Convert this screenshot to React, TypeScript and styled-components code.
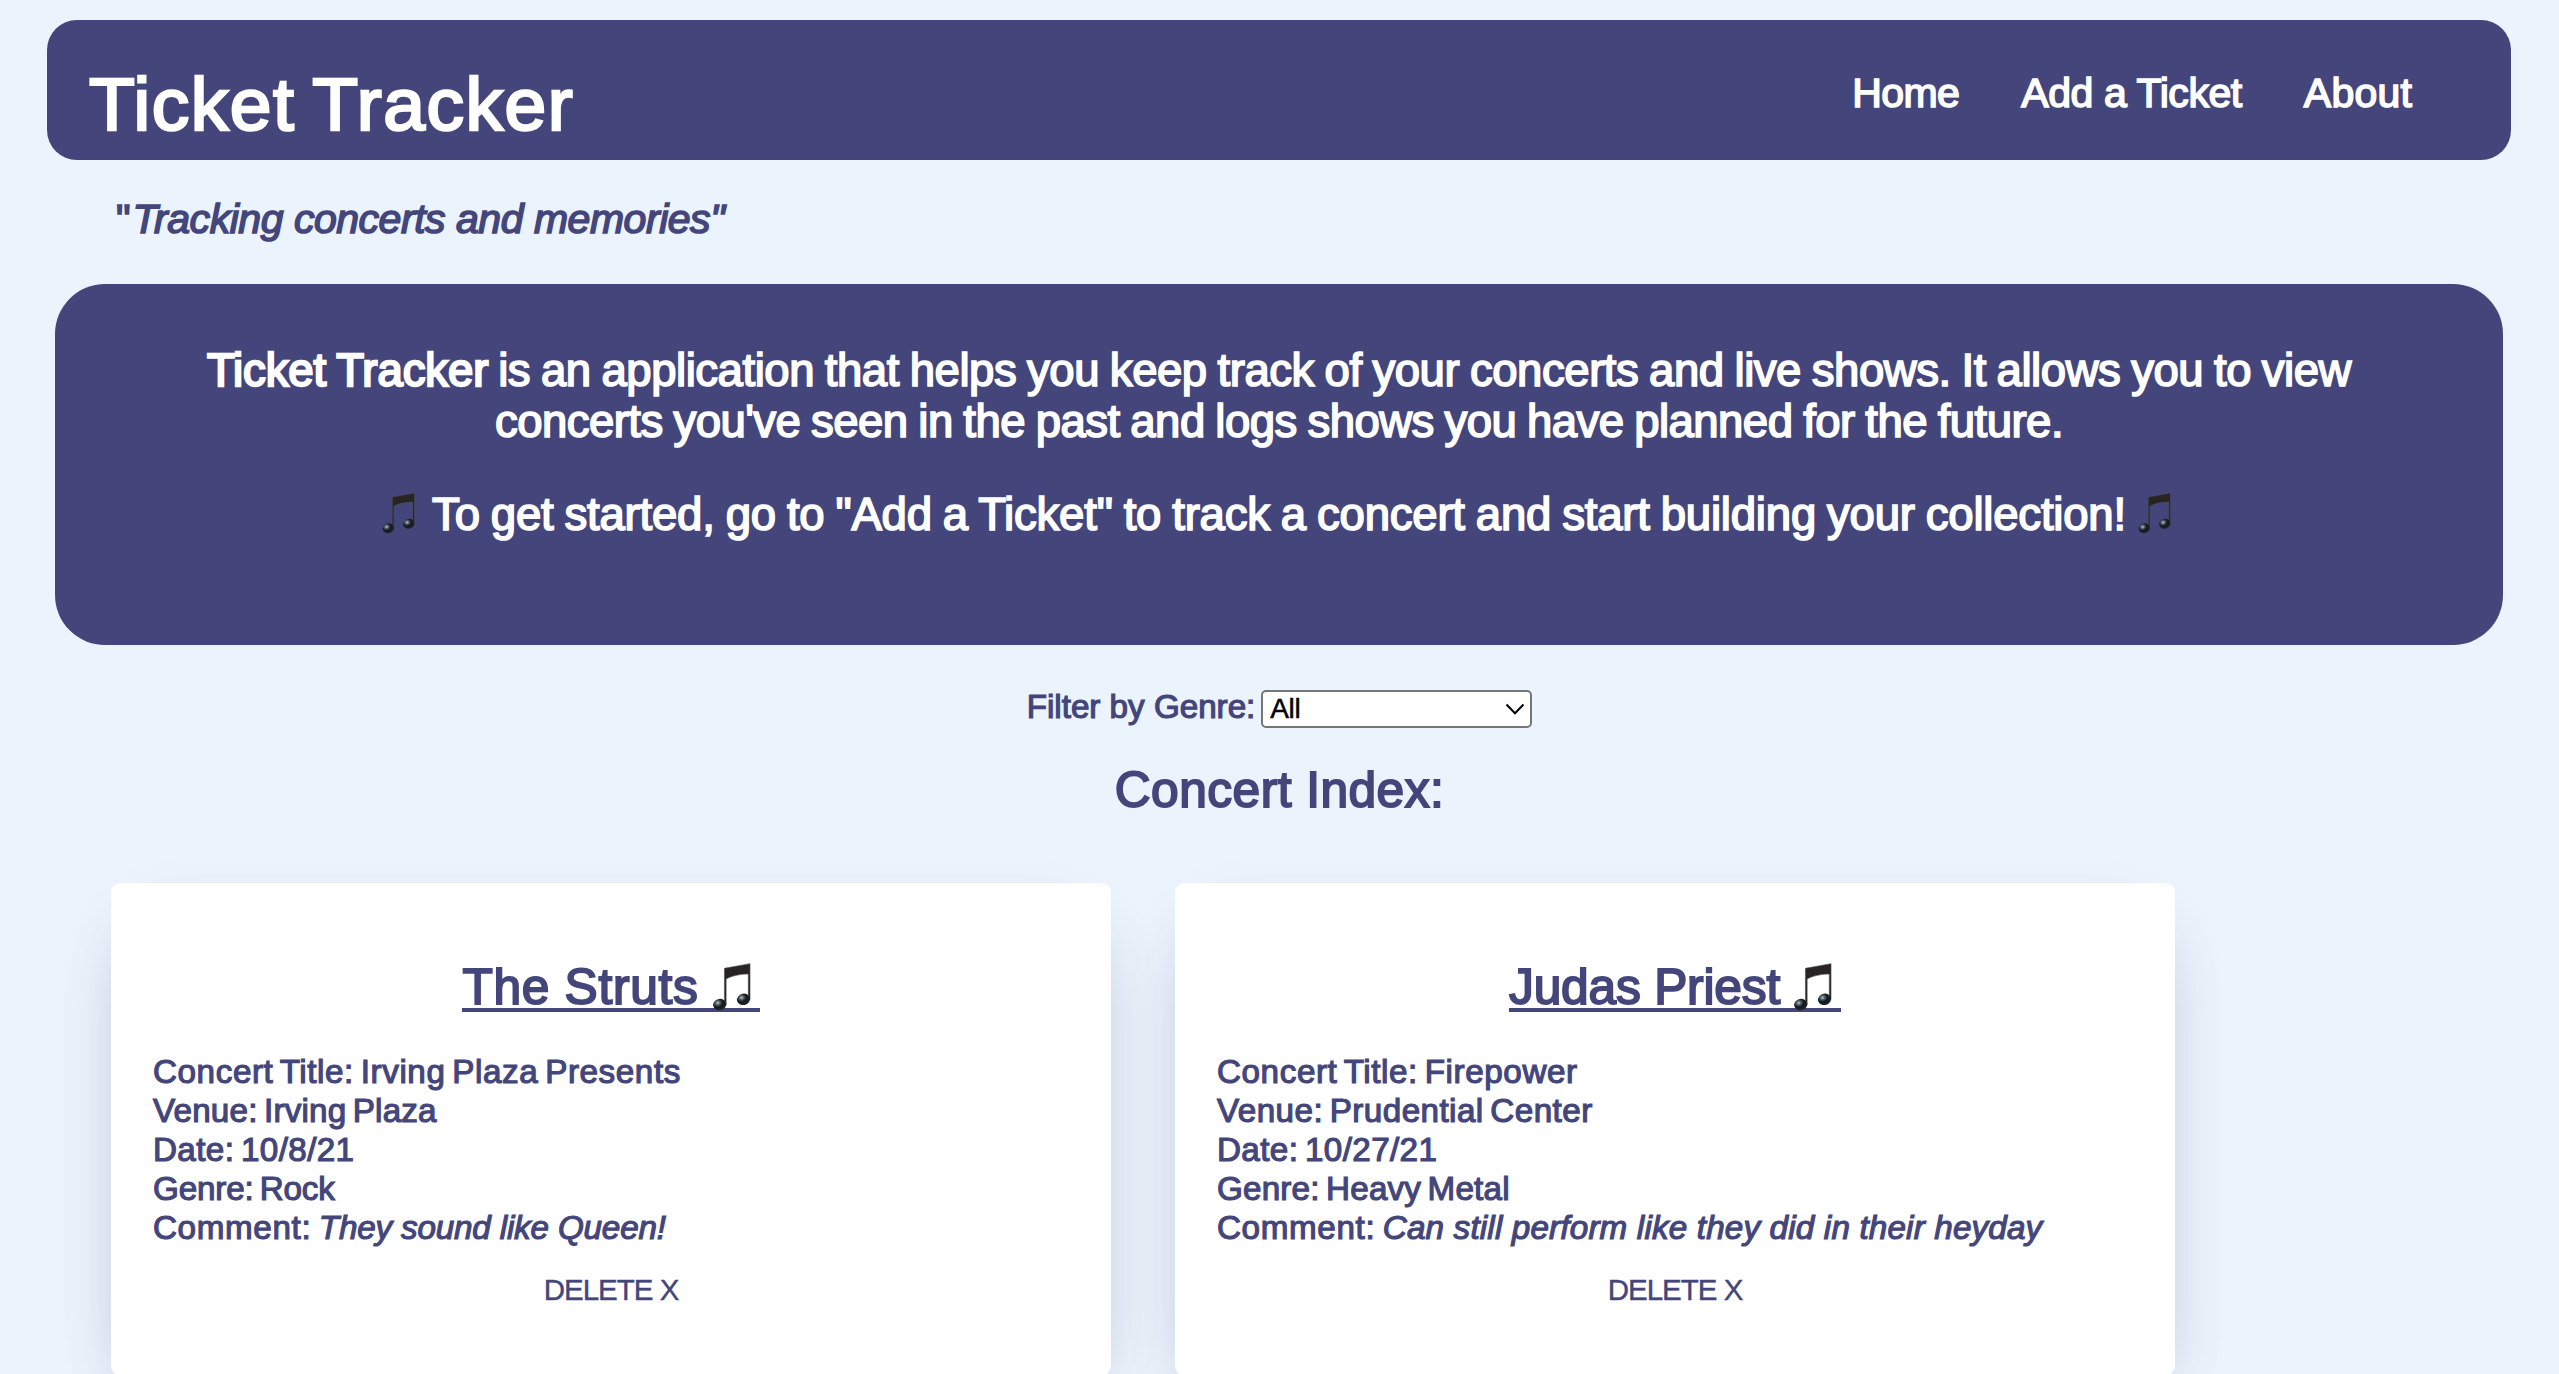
import React from "react";
import styled, { createGlobalStyle } from "styled-components";

const INDIGO = "#44467b";
const SKY = "#ebf3fd";
const SANS = `"Liberation Sans", Arial, Helvetica, sans-serif`;

const GlobalStyle = createGlobalStyle`
  html, body { margin: 0; padding: 0; background: ${SKY}; overflow: hidden; }
  * { box-sizing: border-box; }
`;

const Page = styled.div`
  display: flex;
  flex-direction: column;
  width: 2559px;
  height: 1374px;
  padding-top: 20px;
  overflow: hidden;
  background: ${SKY};
  color: ${INDIGO};
  font-family: ${SANS};
  white-space: nowrap;
`;

const Header = styled.header`
  flex: none;
  display: flex;
  justify-content: space-between;
  align-items: flex-start;
  height: 140px;
  margin: 0 48px 0 47px;
  padding: 0 99px 0 42px;
  border-radius: 30px;
  background: ${INDIGO};
  color: #fff;
`;

const Brand = styled.h1`
  margin: 39px 0 0;
  font-size: 75px;
  font-weight: 400;
  line-height: 90px;
  letter-spacing: 1.5px;
  word-spacing: -4px;
  -webkit-text-stroke: 2.6px currentColor;
`;

const Nav = styled.nav`
  display: flex;
  gap: 62px;
  margin-top: 49px;
`;

const NavLink = styled.a<{ $track: number }>`
  font-size: 41px;
  line-height: 48px;
  letter-spacing: ${(p) => p.$track}px;
  -webkit-text-stroke: 1.6px currentColor;
`;

const Tagline = styled.p`
  margin: 35px 0 0 116px;
  font-size: 41px;
  line-height: 48px;
  -webkit-text-stroke: 1.6px currentColor;

  em {
    margin-left: 2px;
    letter-spacing: -0.47px;
  }
`;

const Intro = styled.section`
  flex: none;
  display: flex;
  flex-direction: column;
  align-items: center;
  height: 361px;
  margin: 41px 56px 0 55px;
  padding-top: 61px;
  border-radius: 50px;
  background: ${INDIGO};
  color: #fff;
  font-size: 45.5px;
  line-height: 51px;
  word-spacing: -1.4px;
  -webkit-text-stroke: 1.7px currentColor;
`;

const IntroLine = styled.div<{ $track: number; $top?: number }>`
  display: flex;
  height: 51px;
  margin-top: ${(p) => p.$top ?? 0}px;
  letter-spacing: ${(p) => p.$track}px;
`;

const Strong = styled.b`
  margin-right: 10px;
  font-weight: 400;
  letter-spacing: -0.1px;
  -webkit-text-stroke: 2.3px currentColor;
`;

const NoteSvg = styled.svg<{ $size: number; $gap: number }>`
  flex: none;
  display: block;
  width: ${(p) => p.$size}px;
  height: ${(p) => (p.$size * 50) / 44}px;
  margin: 0 ${(p) => p.$gap}px;
`;

const FilterRow = styled.div`
  display: flex;
  justify-content: center;
  gap: 6px;
  height: 40px;
  margin-top: 41px;
`;

const FilterLabel = styled.label`
  font-size: 33.2px;
  line-height: 42px;
  -webkit-text-stroke: 1.2px currentColor;
`;

const SelectBox = styled.div`
  position: relative;
  width: 271px;
  height: 38px;
  margin-top: 4px;

  svg {
    position: absolute;
    top: 13px;
    right: 7px;
    width: 20px;
    height: 12px;
    pointer-events: none;
  }
`;

const Select = styled.select`
  appearance: none;
  display: block;
  width: 100%;
  height: 100%;
  margin: 0;
  padding: 0 7px;
  border: 2px solid #767676;
  border-radius: 5px;
  background: #fff;
  color: #000;
  font: 400 28px/32px ${SANS};
  letter-spacing: -0.4px;
  -webkit-text-stroke: 0.5px #000;
`;

const IndexTitle = styled.h2`
  margin: 35px 0 0;
  font-size: 49.7px;
  font-weight: 400;
  line-height: 58px;
  letter-spacing: 0.46px;
  text-align: center;
  -webkit-text-stroke: 1.9px currentColor;
`;

const Cards = styled.div`
  display: flex;
  gap: 64px;
  margin: 64px 0 0 111px;
`;

const Card = styled.article`
  flex: none;
  display: flex;
  flex-direction: column;
  align-items: center;
  width: 1000px;
  height: 492px;
  padding: 76px 42px 0;
  border-radius: 9px;
  background: #fff;
  box-shadow:
    0 24px 76px -12px rgba(40, 50, 80, 0.06),
    0 36px 72px -36px rgba(0, 0, 0, 0.3);
`;

const Artist = styled.h3<{ $track: number }>`
  display: flex;
  align-items: flex-start;
  gap: 10px;
  height: 53px;
  margin: 0;
  border-bottom: 4px solid ${INDIGO};
  font-size: 49.7px;
  font-weight: 400;
  line-height: 57px;
  letter-spacing: ${(p) => p.$track}px;
  -webkit-text-stroke: 1.9px currentColor;
`;

const Details = styled.div`
  align-self: stretch;
  margin-top: 39.5px;
  font-size: 33.2px;
  line-height: 39px;
  -webkit-text-stroke: 1.2px currentColor;
`;

const DetailRow = styled.div<{ $track: number }>`
  letter-spacing: ${(p) => p.$track}px;
  word-spacing: -3px;
`;

const CommentRow = styled.div`
  display: flex;
  gap: 7.5px;
  letter-spacing: 0.65px;
`;

const Comment = styled.em<{ $track: number }>`
  letter-spacing: ${(p) => p.$track}px;
`;

const DeleteButton = styled.button`
  margin: 26.5px 0 0;
  padding: 0;
  border: 0;
  background: none;
  color: ${INDIGO};
  font: 400 29.5px/34px ${SANS};
  letter-spacing: -1px;
  -webkit-text-stroke: 0.4px currentColor;
`;

function Note({ size, gap = 0 }: { size: number; gap?: number }) {
  return (
    <NoteSvg $size={size} $gap={gap} viewBox="0 0 44 50" role="img" aria-label="musical note">
      <defs>
        <radialGradient id="noteHead" cx="0.38" cy="0.32" r="0.62">
          <stop offset="0" stopColor="#b5c6cd" />
          <stop offset="0.3" stopColor="#4c5a62" />
          <stop offset="0.6" stopColor="#14181c" />
          <stop offset="1" stopColor="#1d2529" />
        </radialGradient>
        <linearGradient id="noteBeam" x1="0" y1="0" x2="0" y2="1">
          <stop offset="0" stopColor="#2b2626" />
          <stop offset="1" stopColor="#1f1a1b" />
        </linearGradient>
      </defs>
      <path
        d="M13.3 8 35.4 4V35H33.9V13C28 13 20 14.2 14.8 17.2V39.6H13.3Z"
        fill="url(#noteBeam)"
        stroke="#4a5157"
        strokeWidth="0.5"
      />
      <ellipse cx="9.3" cy="39.3" rx="5.7" ry="4.9" fill="url(#noteHead)" transform="rotate(-12 9.3 39.3)" />
      <ellipse cx="29.8" cy="34.8" rx="5.7" ry="4.9" fill="url(#noteHead)" transform="rotate(-12 29.8 34.8)" />
    </NoteSvg>
  );
}

const links = [
  { label: "Home", track: -0.6 },
  { label: "Add a Ticket", track: -0.42 },
  { label: "About", track: 0.2 },
];

const concerts = [
  {
    artist: "The Struts",
    artistTrack: 0.7,
    title: "Irving Plaza Presents",
    venue: "Irving Plaza",
    venueTrack: 0.2,
    date: "10/8/21",
    genre: "Rock",
    genreTrack: -0.15,
    comment: "They sound like Queen!",
    commentTrack: -0.16,
  },
  {
    artist: "Judas Priest",
    artistTrack: -0.2,
    title: "Firepower",
    venue: "Prudential Center",
    venueTrack: 0.45,
    date: "10/27/21",
    genre: "Heavy Metal",
    genreTrack: 0.2,
    comment: "Can still perform like they did in their heyday",
    commentTrack: 0.18,
  },
];

export default function App() {
  return (
    <>
      <GlobalStyle />
      <Page>
        <Header>
          <Brand>Ticket Tracker</Brand>
          <Nav>
            {links.map((l) => (
              <NavLink key={l.label} $track={l.track}>{l.label}</NavLink>
            ))}
          </Nav>
        </Header>
        <Tagline>"<em>Tracking concerts and memories"</em></Tagline>

        <Intro>
          <IntroLine $track={-0.45}>
            <Strong>Ticket Tracker</Strong>
            <span>is an application that helps you keep track of your concerts and live shows. It allows you to view</span>
          </IntroLine>
          <IntroLine $track={-0.53}>
            concerts you've seen in the past and logs shows you have planned for the future.
          </IntroLine>
          <IntroLine $track={-0.2} $top={42}>
            <Note size={44} gap={-2} />
            <span>&nbsp;To get started, go to "Add a Ticket" to track a concert and start building your collection!&nbsp;</span>
            <Note size={44} gap={-2} />
          </IntroLine>
        </Intro>

        <FilterRow>
          <FilterLabel htmlFor="genre">Filter by Genre:</FilterLabel>
          <SelectBox>
            <Select id="genre" defaultValue="All">
              <option>All</option>
              <option>Rock</option>
              <option>Heavy Metal</option>
            </Select>
            <svg viewBox="0 0 20 12" fill="none" stroke="#000" strokeWidth="2">
              <path d="M1.5 1.5 10 10.2 18.5 1.5" />
            </svg>
          </SelectBox>
        </FilterRow>

        <IndexTitle>Concert Index:</IndexTitle>

        <Cards>
          {concerts.map((c) => (
            <Card key={c.artist}>
              <Artist $track={c.artistTrack}>
                {c.artist}
                <Note size={51} />
              </Artist>
              <Details>
                <DetailRow $track={0.6}>Concert Title: {c.title}</DetailRow>
                <DetailRow $track={c.venueTrack}>Venue: {c.venue}</DetailRow>
                <DetailRow $track={0.4}>Date: {c.date}</DetailRow>
                <DetailRow $track={c.genreTrack}>Genre: {c.genre}</DetailRow>
                <CommentRow>
                  <span>Comment:</span>
                  <Comment $track={c.commentTrack}>{c.comment}</Comment>
                </CommentRow>
              </Details>
              <DeleteButton>DELETE X</DeleteButton>
            </Card>
          ))}
        </Cards>
      </Page>
    </>
  );
}
